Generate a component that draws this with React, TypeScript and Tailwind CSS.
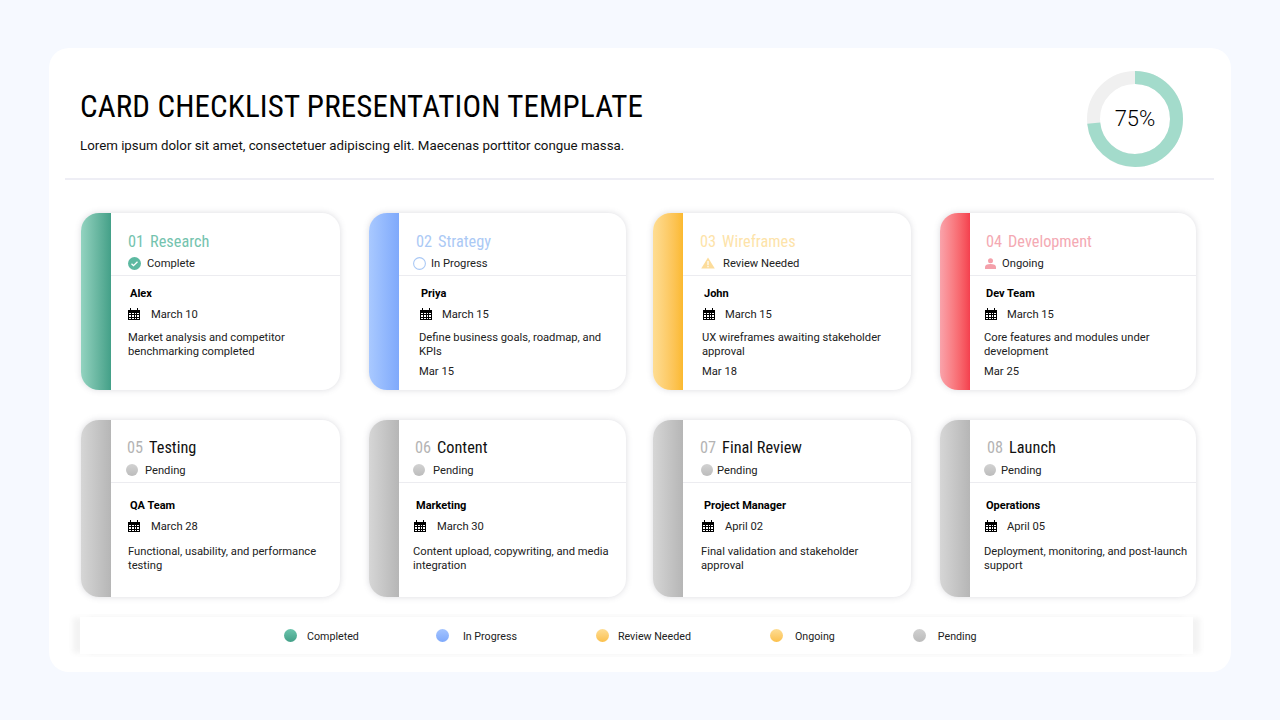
const Calendar = () => (
  <svg viewBox="0 0 12 12" className="w-[12px] h-[12px] shrink-0" shapeRendering="crispEdges">
    <path fill="#000" d="M0 1.5h2V0h1v1.5h6V0h1v1.5h2V12H0z" />
    <path fill="#fff" d="M1 4.5h2v1.500H1zM4 4.500h1.500v1.500H4zM6.500 4.500H8v1.500H6.500zM9 4.500h2v1.500H9zM1 7h2v1.500H1zM4 7h1.500v1.500H4zM6.500 7H8v1.500H6.500zM9 7h2v1.500H9zM1 9.500h2V11H1zM4 9.500h1.500V11H4zM6.500 9.500H8V11H6.500zM9 9.500h2V11H9z" />
  </svg>
);

const icons: Record<string, React.ReactNode> = {
  check: (
    <svg viewBox="0 0 13 13" className="w-[13px] h-[13px]">
      <circle cx="6.500" cy="6.500" r="6.500" fill="#5cb9a1" />
      <path d="M3.500 6.700l2 2 4-4" fill="none" stroke="#fff" strokeWidth="1.300" />
    </svg>
  ),
  ring: (
    <svg viewBox="0 0 13 13" className="w-[13px] h-[13px]">
      <circle cx="6.500" cy="6.500" r="5.900" fill="#fff" stroke="#a9c8f5" strokeWidth="1.100" />
    </svg>
  ),
  warn: (
    <svg viewBox="0 0 14 12" className="w-[14px] h-[12px]">
      <path d="M7 .5L13.800 11.500H.2z" fill="#fcdc9a" />
      <path d="M6.400 4h1.200v4.200H6.400zM6.400 9h1.200v1.200H6.400z" fill="#fff" />
    </svg>
  ),
  user: (
    <svg viewBox="0 0 11 11" className="w-[11px] h-[11px]">
      <circle cx="5.500" cy="2.800" r="2.500" fill="#f4a0aa" />
      <path d="M0 11V9c0-2 2-3 5.500-3S11 7 11 9v2z" fill="#f4a0aa" />
    </svg>
  ),
  gray: <span className="block w-[12px] h-[12px] rounded-full bg-gradient-to-b from-[#d2d2d2] to-[#bcbcbc]" />,
};

type Item = {
  n: string; title: string; status: string; icon: string; who: string; date: string; desc: string; due?: string;
  w: string; bar: string; numC: string; titleC: string;
  titleP: string; statusP: string; gap: string; nameP: string; dateP: string; dateG: string; descP: string;
};

const cardsA: Item[] = [
  { n: "01", title: "Research", status: "Complete", icon: "check", who: "Alex", date: "March 10", desc: "Market analysis and competitor\nbenchmarking completed",
    w: "w-[259px]", bar: "from-[#93d3c0] to-[#43a088]", numC: "text-[#74c3ae]", titleC: "text-[#74c3ae]",
    titleP: "pl-[17px]", statusP: "pl-[17px]", gap: "gap-[6px]", nameP: "pl-[19px]", dateP: "pl-[17px]", dateG: "gap-[11px]", descP: "pl-[17px]" },
  { n: "02", title: "Strategy", status: "In Progress", icon: "ring", who: "Priya", date: "March 15", desc: "Define business goals, roadmap, and\nKPIs", due: "Mar 15",
    w: "w-[257px]", bar: "from-[#a9c9ff] to-[#7fa9fb]", numC: "text-[#abc9f5]", titleC: "text-[#abc9f5]",
    titleP: "pl-[17px]", statusP: "pl-[14px]", gap: "gap-[5px]", nameP: "pl-[22px]", dateP: "pl-[21px]", dateG: "gap-[10px]", descP: "pl-[20px]" },
  { n: "03", title: "Wireframes", status: "Review Needed", icon: "warn", who: "John", date: "March 15", desc: "UX wireframes awaiting stakeholder\napproval", due: "Mar 18",
    w: "w-[258px]", bar: "from-[#fedd93] to-[#fbb92e]", numC: "text-[#fde3a9]", titleC: "text-[#fde3a9]",
    titleP: "pl-[17px]", statusP: "pl-[18px]", gap: "gap-[8px]", nameP: "pl-[21px]", dateP: "pl-[20px]", dateG: "gap-[10px]", descP: "pl-[19px]" },
  { n: "04", title: "Development", status: "Ongoing", icon: "user", who: "Dev Team", date: "March 15", desc: "Core features and modules under\ndevelopment", due: "Mar 25",
    w: "w-[256px]", bar: "from-[#f9a3ab] to-[#f43f4e]", numC: "text-[#f4a9b3]", titleC: "text-[#f4a9b3]",
    titleP: "pl-[16px]", statusP: "pl-[15px]", gap: "gap-[6px]", nameP: "pl-[16px]", dateP: "pl-[15px]", dateG: "gap-[10px]", descP: "pl-[14px]" },
];

const gray = { bar: "from-[#d6d6d6] to-[#b6b6b6]", numC: "text-[#b4b4b4]", titleC: "text-[#111111]", status: "Pending", icon: "gray" };

const cardsB: Item[] = [
  { ...gray, n: "05", title: "Testing", who: "QA Team", date: "March 28", desc: "Functional, usability, and performance\ntesting", w: "w-[259px]",
    titleP: "pl-[16px]", statusP: "pl-[15px]", gap: "gap-[7px]", nameP: "pl-[19px]", dateP: "pl-[17px]", dateG: "gap-[11px]", descP: "pl-[17px]" },
  { ...gray, n: "06", title: "Content", who: "Marketing", date: "March 30", desc: "Content upload, copywriting, and media\nintegration", w: "w-[257px]",
    titleP: "pl-[16px]", statusP: "pl-[14px]", gap: "gap-[8px]", nameP: "pl-[17px]", dateP: "pl-[15px]", dateG: "gap-[11px]", descP: "pl-[14px]" },
  { ...gray, n: "07", title: "Final Review", who: "Project Manager", date: "April 02", desc: "Final validation and stakeholder\napproval", w: "w-[258px]",
    titleP: "pl-[17px]", statusP: "pl-[18px]", gap: "gap-[4px]", nameP: "pl-[21px]", dateP: "pl-[19px]", dateG: "gap-[11px]", descP: "pl-[18px]" },
  { ...gray, n: "08", title: "Launch", who: "Operations", date: "April 05", desc: "Deployment, monitoring, and post-launch\nsupport", w: "w-[256px]",
    titleP: "pl-[17px]", statusP: "pl-[14px]", gap: "gap-[5px]", nameP: "pl-[16px]", dateP: "pl-[15px]", dateG: "gap-[10px]", descP: "pl-[14px]" },
];

const Card = ({ c, lower }: { c: Item; lower: boolean }) => (
  <div className={`${c.w} h-[177px] flex rounded-[18px] overflow-hidden bg-white shadow-[0_0_6px_rgba(90,90,110,0.22)]`}>
    <div className={`w-[30px] shrink-0 bg-gradient-to-r ${c.bar}`} />
    <div className="flex-1 min-w-0 flex flex-col">
      <div className={`h-[63px] shrink-0 border-b border-[#ececf0] flex flex-col ${lower ? "pt-[18px]" : "pt-[19px]"}`}>
        <div className={`${c.titleP} h-[20px] flex items-center gap-[6px] text-[16.300px] leading-[20px] [font-stretch:75%] whitespace-nowrap`}>
          <span className={c.numC}>{c.n}</span>
          <span className={c.titleC}>{c.title}</span>
        </div>
        <div className={`${c.statusP} ${c.gap} ${lower ? "mt-[3px]" : "mt-[2px]"} h-[18px] flex items-center text-[11.200px] text-[#222222]`}>
          {icons[c.icon]}
          <span className="pt-[2px]">{c.status}</span>
        </div>
      </div>
      <div className={`flex flex-col ${lower ? "pt-[14px]" : "pt-[9px]"} text-[11.200px] text-[#222222]`}>
        <div className={`${c.nameP} h-[16px] pt-[1px] leading-[16px] font-bold text-black text-[11px]`}>{c.who}</div>
        <div className={`${c.dateP} ${c.dateG} mt-[5px] h-[16px] flex items-center`}>
          <Calendar />
          <span className="pt-[2px]">{c.date}</span>
        </div>
        <div className={`${c.descP} ${lower ? "mt-[11px]" : "mt-[9px]"} leading-[14px] whitespace-pre-line`}>{c.desc}</div>
        {c.due && <div className={`${c.descP} mt-[5px] leading-[16px]`}>{c.due}</div>}
      </div>
    </div>
  </div>
);

const legend = [
  ["Completed", "from-[#6cc5ad] to-[#43a088]", "ml-[204px]", "gap-[10px]"],
  ["In Progress", "from-[#a4c4ff] to-[#7fa9fb]", "ml-[77px]", "gap-[14px]"],
  ["Review Needed", "from-[#fedd93] to-[#fbc04a]", "ml-[79px]", "gap-[9px]"],
  ["Ongoing", "from-[#fedd93] to-[#fbc04a]", "ml-[79px]", "gap-[12px]"],
  ["Pending", "from-[#d0d0d0] to-[#bbbbbb]", "ml-[78px]", "gap-[12px]"],
];

export default function App() {
  return (
    <div className="w-[1280px] h-[720px] bg-[#f6f9ff] pt-[48px] pl-[49px] overflow-hidden font-['Roboto',sans-serif]">
      <div className="w-[1182px] h-[624px] rounded-[20px] bg-white flex flex-col">
        <div className="h-[132px] ml-[16px] mr-[17px] shrink-0 border-b-2 border-[#eeeef5] flex justify-between">
          <div className="pl-[15px] pt-[39px]">
            <h1 className="text-[31px] leading-[40px] tracking-[0.15px] [font-stretch:75%] text-black whitespace-nowrap">CARD CHECKLIST PRESENTATION TEMPLATE</h1>
            <p className="mt-[9px] text-[13.300px] leading-[20px] text-[#111111] whitespace-nowrap">Lorem ipsum dolor sit amet, consectetuer adipiscing elit. Maecenas porttitor congue massa.</p>
          </div>
          <div className="relative w-[96px] h-[96px] mt-[23px] mr-[31px]">
            <svg viewBox="0 0 96 96" className="w-[96px] h-[96px] -rotate-90">
              <circle cx="48" cy="48" r="41.500" fill="none" stroke="#f0f0f0" strokeWidth="13" />
              <circle cx="48" cy="48" r="41.500" fill="none" stroke="#a3dbcb" strokeWidth="13" strokeDasharray="191 261" />
            </svg>
            <span className="absolute inset-0 pb-[2px] flex items-center justify-center text-[22px] font-light text-black">75%</span>
          </div>
        </div>
        <div className="pl-[32px] pt-[33px] flex">
          {cardsA.map((c, i) => (
            <div key={c.n} className={i === 2 ? "ml-[27px]" : i === 0 ? "" : "ml-[29px]"}>
              <Card c={c} lower={false} />
            </div>
          ))}
        </div>
        <div className="pl-[32px] pt-[30px] flex">
          {cardsB.map((c, i) => (
            <div key={c.n} className={i === 2 ? "ml-[27px]" : i === 0 ? "" : "ml-[29px]"}>
              <Card c={c} lower={true} />
            </div>
          ))}
        </div>
        <div className="mt-[20px] ml-[31px] w-[1113px] h-[37px] pt-[1px] bg-white flex items-center text-[10.700px] text-[#222222] shadow-[-8px_0_5px_-1px_rgba(120,120,120,0.09),8px_0_5px_-1px_rgba(120,120,120,0.09)]">
          {legend.map(([t, g, m, gap]) => (
            <div key={t} className={`flex items-center ${m} ${gap}`}>
              <span className={`w-[13px] h-[13px] rounded-full bg-gradient-to-b ${g}`} />
              <span className="pt-[2px]">{t}</span>
            </div>
          ))}
        </div>
      </div>
    </div>
  );
}
